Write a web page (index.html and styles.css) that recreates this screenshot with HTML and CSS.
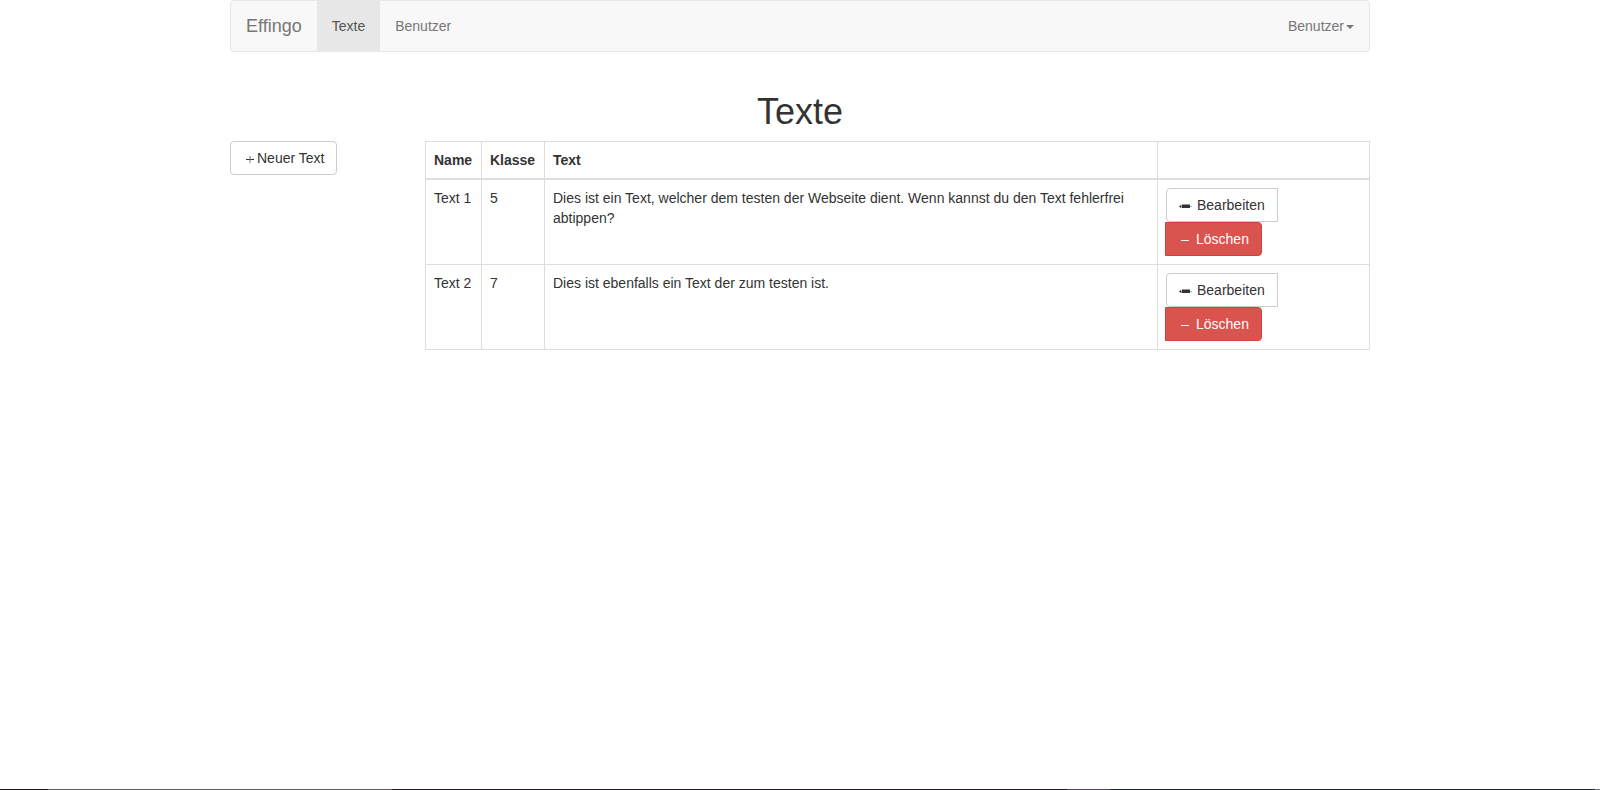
FILE: index.html
```html
<!DOCTYPE html>
<html lang="de">
<head>
<meta charset="utf-8">
<title>Effingo</title>
<link rel="stylesheet" href="styles.css">
</head>
<body>
<div class="container">
  <nav class="navbar">
    <a class="brand" href="#">Effingo</a>
    <a class="nav-link active" href="#">Texte</a>
    <a class="nav-link" href="#">Benutzer</a>
    <a class="nav-link nav-user" href="#">Benutzer<span class="caret"></span></a>
  </nav>
  <h1>Texte</h1>
  <main class="row">
    <aside class="sidebar">
      <button class="btn" type="button"><svg class="icon icon-plus" viewBox="0 0 14 14"><path d="M3 8.5h8" stroke="currentColor" fill="none"/><path d="M7 5v7" stroke="#777" fill="none"/></svg>Neuer Text</button>
    </aside>
    <table class="table">
      <colgroup><col class="col-name"><col class="col-class"><col><col class="col-actions"></colgroup>
      <thead>
        <tr><th>Name</th><th>Klasse</th><th>Text</th><th></th></tr>
      </thead>
      <tbody>
        <tr>
          <td>Text 1</td>
          <td>5</td>
          <td>Dies ist ein Text, welcher dem testen der Webseite dient. Wenn kannst du den Text fehlerfrei abtippen?</td>
          <td>
            <div class="btn-group">
              <button class="btn btn-first" type="button"><svg class="icon" viewBox="0 0 14 14"><path d="M0 8.5 2 7v3z" fill="#333"/><path d="M2 7h2v3H2z" fill="#aaa"/><path d="M3 7h8v3H3z" fill="#333"/><path d="M3 6.5h8" stroke="#999"/><path d="M11 8h2v1h-2z" fill="#8fb8d8"/></svg>Bearbeiten</button>
              <button class="btn btn-danger" type="button"><svg class="icon" viewBox="0 0 14 14"><path d="M3 8.5h8" stroke="currentColor" fill="none"/></svg>Löschen</button>
            </div>
          </td>
        </tr>
        <tr>
          <td>Text 2</td>
          <td>7</td>
          <td>Dies ist ebenfalls ein Text der zum testen ist.</td>
          <td>
            <div class="btn-group">
              <button class="btn btn-first" type="button"><svg class="icon" viewBox="0 0 14 14"><path d="M0 8.5 2 7v3z" fill="#333"/><path d="M2 7h2v3H2z" fill="#aaa"/><path d="M3 7h8v3H3z" fill="#333"/><path d="M3 6.5h8" stroke="#999"/><path d="M11 8h2v1h-2z" fill="#8fb8d8"/></svg>Bearbeiten</button>
              <button class="btn btn-danger" type="button"><svg class="icon" viewBox="0 0 14 14"><path d="M3 8.5h8" stroke="currentColor" fill="none"/></svg>Löschen</button>
            </div>
          </td>
        </tr>
      </tbody>
    </table>
  </main>
</div>
<footer class="strip"></footer>
</body>
</html>
```
FILE: styles.css
```css
* { box-sizing: border-box; }

body {
  display: flex;
  flex-direction: column;
  min-height: 100vh;
  margin: 0;
  background: #fff;
  color: #333;
  font: 14px/20px "Liberation Sans", Arial, sans-serif;
}

.container {
  flex: 1;
  width: 100%;
  max-width: 1170px;
  margin: 0 auto;
  padding: 0 15px;
}

.navbar {
  display: flex;
  border: 1px solid #e7e7e7;
  border-radius: 4px;
  background: #f8f8f8;
}

.brand,
.nav-link {
  padding: 15px;
  color: #777;
  text-decoration: none;
}

.brand { font-size: 18px; }

.nav-link.active {
  background: #e7e7e7;
  color: #555;
}

.nav-user { margin-left: auto; }

.caret {
  display: inline-block;
  margin-left: 2px;
  border: 4px solid transparent;
  border-top-color: currentColor;
  border-bottom: 0;
  vertical-align: middle;
}

h1 {
  margin: 40px 0 10px;
  font-size: 36px;
  font-weight: 500;
  line-height: 39px;
  text-align: center;
}

.row { display: flex; align-items: flex-start; }

.sidebar { flex: 0 0 195px; }

.table {
  flex: 1;
  border: 1px solid #ddd;
  border-collapse: collapse;
}

.table th,
.table td {
  padding: 8px;
  border: 1px solid #ddd;
  text-align: left;
  vertical-align: top;
}

.table th { border-bottom-width: 2px; }

.col-name { width: 56px; }

.col-class { width: 63px; }

.table td:first-child { white-space: nowrap; }

.col-actions { width: 212px; }

.btn {
  display: inline-flex;
  align-items: center;
  padding: 6px 12px;
  border: 1px solid #ccc;
  border-radius: 4px;
  background: #fff;
  color: #333;
  font: inherit;
}

.btn-group {
  display: flex;
  flex-direction: column;
  align-items: flex-start;
}

.btn-first { border-radius: 4px 0 0 4px; }

.btn-danger {
  margin-left: -1px;
  border-color: #d43f3a;
  border-radius: 0 4px 4px 0;
  background: #d9534f;
  color: #fff;
}

.icon {
  width: 14px;
  height: 14px;
  margin-right: 4px;
}

.icon-plus { margin-right: 0; }

.strip {
  height: 1px;
  background: linear-gradient(to right, #1a1418 3%, #5f5c5c 3% 24.5%, #211a20 24.5% 66.7%, #504a58 66.7% 69.4%, #202a30 69.4% 99.7%, #777 99.7%);
}
```
